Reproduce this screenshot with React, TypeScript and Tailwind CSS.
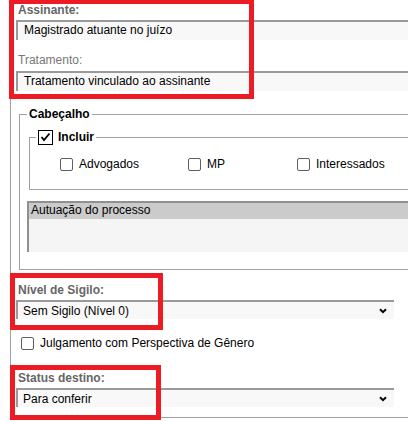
// Minuta — assinatura, cabeçalho e sigilo, with the reviewer's red marks on top.

const LINE = 'border-[#a0a0a0]'

function Label({ children, bold = true, className = '' }: { children: React.ReactNode; bold?: boolean; className?: string }) {
  return (
    <div
      className={`ml-[2px] h-[20px] text-[12px] leading-[18px] ${bold ? 'font-bold text-[#666]' : 'text-[#777]'} ${className}`}
    >
      {children}
    </div>
  )
}

function Field({ children }: { children: React.ReactNode }) {
  return (
    <div className="h-[20px] w-[420px] border-l-2 border-t-2 border-[#9a9a9a] bg-[#f8f8f8] pl-[6px] text-[12px] leading-[17px] text-black">
      {children}
    </div>
  )
}

function Select({ value }: { value: string }) {
  return (
    <div className="flex h-[19px] w-[378px] items-center justify-between border-l-2 border-t-2 border-[#9a9a9a] bg-[#f8f8f8] pl-[5px] pr-[7px] text-[12px] leading-[16px] text-black">
      <span>{value}</span>
      <svg width="8" height="6" viewBox="0 0 8 6" className="mt-[1px]">
        <path d="M1 1.2 L4 4.2 L7 1.2" fill="none" stroke="#000" strokeWidth="2" />
      </svg>
    </div>
  )
}

function Box() {
  return <span className="inline-block h-[13px] w-[13px] shrink-0 rounded-[2px] border border-[#5f5f5f] bg-white" />
}

function Check({ label, className = '' }: { label: string; className?: string }) {
  return (
    <div className={`flex items-center gap-[6px] text-[12px] leading-[14px] text-black ${className}`}>
      <Box />
      <span>{label}</span>
    </div>
  )
}

function Mark({ className }: { className: string }) {
  return <div className={`pointer-events-none absolute border-[5px] border-[#ed1c24] ${className}`} />
}

export default function App() {
  return (
    <div
      className="relative h-[421px] w-[408px] overflow-hidden bg-white"
      style={{ fontFamily: '"Liberation Sans", Arial, sans-serif' }}
    >
      <div className={`ml-[10px] h-[418px] w-[420px] border-b border-l ${LINE} pl-[5px]`}>
        <Label className="pt-[1px]">Assinante:</Label>
        <Field>Magistrado atuante no juízo</Field>

        <Label bold={false} className="mt-[11px]">
          Tratamento:
        </Label>
        <Field>Tratamento vinculado ao assinante</Field>

        {/* Cabeçalho */}
        <fieldset className={`ml-[3px] mt-[16px] w-[420px] border ${LINE} pb-[17px] pl-[8px]`}>
          <legend className="-ml-[1px] px-[2px] text-[12px] font-bold leading-[14px] text-black">Cabeçalho</legend>

          <fieldset className={`ml-[1px] mt-[8px] border ${LINE} pb-[18px] pl-[30px]`}>
            <legend className="ml-[-24px] flex items-center gap-[5px] px-[2px] text-[12px] font-bold leading-[16px] text-black">
              <span className="flex h-[15px] w-[15px] items-center justify-center border border-black bg-white">
                <svg width="11" height="10" viewBox="0 0 11 10">
                  <path d="M1.5 5 L4 8 L9.5 1.5" fill="none" stroke="#000" strokeWidth="1.8" />
                </svg>
              </span>
              Incluir
            </legend>
            <div className="mt-[12px] flex">
              <Check label="Advogados" className="w-[128px]" />
              <Check label="MP" className="w-[109px]" />
              <Check label="Interessados" />
            </div>
          </fieldset>

          <div className="-ml-[1px] mt-[11px] h-[51px] border-l-2 border-t-2 border-[#909090] bg-[#f5f5f5]">
            <div className="h-[16px] bg-[#cbcbcb] pl-[2px] text-[12px] leading-[15px] text-black">Autuação do processo</div>
          </div>
        </fieldset>

        <Label className="mt-[10px] pt-[1px]">Nível de Sigilo:</Label>
        <Select value="Sem Sigilo (Nível 0)" />

        <Check label="Julgamento com Perspectiva de Gênero" className="ml-[5px] mt-[17px]" />

        <Label className="mt-[18px] pt-[1px]">Status destino:</Label>
        <Select value="Para conferir" />
      </div>

      <Mark className="left-[9px] top-[-1px] h-[100px] w-[245px]" />
      <Mark className="left-[10px] top-[273px] h-[57px] w-[153px]" />
      <Mark className="left-[10px] top-[365px] h-[55px] w-[151px]" />
    </div>
  )
}
